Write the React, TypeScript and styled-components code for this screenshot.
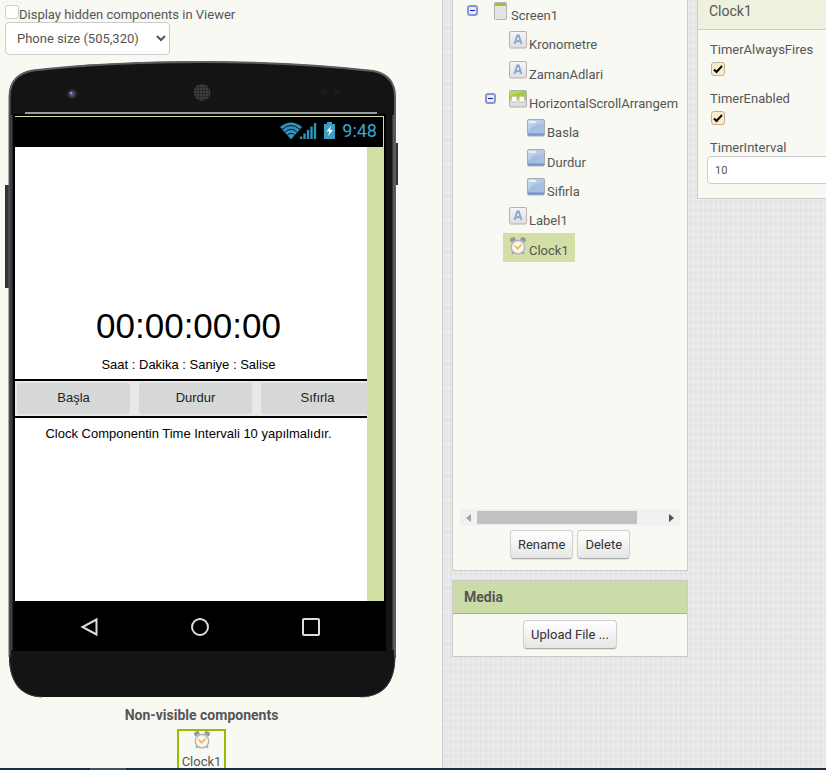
import React from "react";
import styled, { createGlobalStyle, css } from "styled-components";

const GlobalStyle = createGlobalStyle`
  *, *::before, *::after { box-sizing: border-box; }
  html, body, #root { height: 100%; margin: 0; }
  body {
    overflow: hidden;
    font-family: Roboto, "Liberation Sans", sans-serif;
    font-size: 13px;
    line-height: 16px;
    color: #555;
    background-color: #e7e7e7;
    background-image:
      repeating-linear-gradient(0deg, rgba(0,0,0,.015) 0 1px, transparent 1px 3px, rgba(255,255,255,.2) 3px 4px, transparent 4px 7px),
      repeating-linear-gradient(90deg, rgba(0,0,0,.015) 0 1px, transparent 1px 3px, rgba(255,255,255,.2) 3px 4px, transparent 4px 5px);
  }
  button, input, select { font: inherit; color: inherit; margin: 0; }
`;

const Page = styled.div`
  height: 100vh;
  display: grid;
  grid-template-rows: minmax(0, 1fr) 2px;
`;

const Columns = styled.main`
  display: grid;
  grid-template-columns: minmax(0, 1fr) 236px 129px;
  column-gap: 9px;
  overflow: hidden;
`;

const Taskbar = styled.div`
  background: #1b2c3c;
  padding-left: 90px;
`;

const TaskbarItem = styled.div`
  width: 36px;
  height: 2px;
  background: #43525f;
`;

/* ---------- Viewer ---------- */

const Viewer = styled.section`
  background: #f8f9f3;
  border-right: 1px solid #ccc;
  padding: 5px 0 0 5px;
  overflow: hidden;
`;

const ViewerOption = styled.label`
  display: flex;
  align-items: flex-start;
  height: 17px;
  line-height: 19px;
`;

const PlainCheck = styled.input`
  appearance: none;
  width: 14px;
  height: 14px;
  background: #fff;
  border: 1px solid #ccc;
  border-radius: 3px;
`;

const SizeSelect = styled.select`
  display: block;
  width: 165px;
  height: 33px;
  padding: 0 2px 0 7px;
  background: #fff;
  border: 1px solid #ccc;
  border-radius: 4px;
`;

const Device = styled.div`
  position: relative;
  width: 393px;
  height: 643px;
  padding: 59px 12px 0 8px;
`;

const DeviceFrame = styled.svg`
  position: absolute;
  inset: 0;
`;

const Bezel = styled.div`
  position: relative;
  background: #000;
  padding: 2px 2px 0;
`;

const StatusBar = styled.div`
  height: 31px;
  display: flex;
  align-items: center;
  justify-content: flex-end;
  padding: 0 6px 2px 0;
  background: #000;
  border-top: 1px solid #d2e0a6;
  border-right: 1px solid #d2e0a6;
  font-size: 18px;
  line-height: 28px;
  color: #33a9d6;

  svg { margin-right: 6px; }
`;

const Screen = styled.div`
  height: 454px;
  padding-right: 17px;
  background: #d2e0a6;
`;

const AppCanvas = styled.div`
  height: 100%;
  padding-top: 158px;
  background: #fff;
  color: #000;
  text-align: center;
  font-family: "Liberation Sans", Arial, sans-serif;
  padding-right: 5px;
`;

const BigTime = styled.div`
  font-size: 35px;
  line-height: 42px;
`;

const Caption = styled.div`
  line-height: 16px;
  padding: 10px 0 6px;
`;

const Note = styled(Caption)`
  padding: 8px 0;
`;

const ScrollRow = styled.div`
  display: flex;
  gap: 9px;
  margin-right: -5px;
  padding: 2px 0 2px 2px;
  height: 39px;
  overflow: hidden;
  background: #e8e8e8;
  border: solid #000;
  border-width: 2px 0;
`;

const AppButton = styled.button`
  flex: 0 0 113px;
  height: 31px;
  padding: 0 0 2px;
  border: 0;
  border-radius: 2px;
  background: #d6d8d7;
  color: #222;
`;

const NavBar = styled.div`
  display: flex;
  justify-content: space-around;
  align-items: center;
  height: 50px;
  padding: 2px 18px 0;
`;

const NavButton = styled.button`
  display: flex;
  padding: 0;
  border: 0;
  background: none;
`;

const HiddenParts = styled.div`
  display: flex;
  flex-direction: column;
  align-items: center;
  width: 393px;
  padding-top: 9px;
`;

const HiddenTitle = styled.h2`
  margin: 0 0 6px;
  font-size: 14px;
  line-height: 16px;
`;

const HiddenComponent = styled.button`
  display: flex;
  flex-direction: column;
  align-items: center;
  height: 46px;
  padding: 0 3px;
  border: 2px solid #93bf00;
  background: none;

  span { margin-top: 5px; }
`;

/* ---------- Panels ---------- */

const PanelColumn = styled.section`
  display: flex;
  flex-direction: column;
  gap: 9px;
  min-width: 0;
`;

const Panel = styled.div<{ $open?: boolean }>`
  background: #f8f9f3;
  border: 1px solid #ccc;
  ${(p) => p.$open && css`border-top: 0;`}
  overflow: hidden;
`;

const PanelHeader = styled.h2`
  margin: 0;
  padding: 0 11px;
  font-size: 14px;
  line-height: 32px;
  background: #ccdca8;
  border-bottom: 1px solid #aaa;
`;

const TreePanel = styled(Panel)`
  height: 571px;
  padding: 0 7px;
`;

const Tree = styled.ul`
  display: grid;
  grid-auto-rows: 1fr;
  align-content: start;
  height: 264px;
  margin: -2px 0 247px;
  padding: 0;
  list-style: none;
  overflow: hidden;
`;

const TreeRow = styled.li<{ $level: number }>`
  display: flex;
  min-width: 0;
  padding-left: ${(p) => p.$level * 18}px;
`;

const ToggleSlot = styled.div`
  flex: 0 0 25px;
  display: flex;
  justify-content: center;
  align-items: flex-start;
  padding-top: 7px;
`;

const Toggle = styled.button`
  display: flex;
  padding: 0;
  border: 0;
  background: none;
`;

const TreeItem = styled.a<{ $selected?: boolean }>`
  display: flex;
  gap: 2px;
  padding: 4px 6px 0;
  color: #555;
  text-decoration: none;
  white-space: nowrap;
  background: ${(p) => (p.$selected ? "#d2e0a6" : "transparent")};

  svg { flex: none; }
  span { padding-top: 6px; }
`;

const ScrollBar = styled.div`
  display: grid;
  grid-template-columns: 17px 1fr 17px;
  align-items: center;
  height: 17px;
  background: #f1f1f1;
`;

const ScrollArrow = styled.button`
  display: flex;
  justify-content: center;
  padding: 0;
  border: 0;
  background: none;
`;

const ScrollThumb = styled.div`
  width: 86%;
  height: 13px;
  background: #c1c1c1;
`;

const ButtonRow = styled.div`
  display: flex;
  justify-content: center;
  gap: 4px;
  padding: 4px 0;
`;

const MediaBody = styled(ButtonRow)`
  padding: 6px 0 7px;
`;

const PushButton = styled.button`
  height: 29px;
  padding: 1px 7px 0;
  border: 1px solid #d0d0d0;
  border-bottom-color: #aaa;
  border-radius: 4px;
  background: linear-gradient(#fff, #e6e6e6);
  box-shadow: 0 1px 1px rgba(0, 0, 0, .08);
  color: #333;
`;

/* ---------- Properties ---------- */

const PropsPanel = styled(Panel)`
  height: 199px;
  border-right: 0;
`;

const PropsHeader = styled.div`
  height: 30px;
  padding: 3px 11px 0;
  font-size: 14px;
  background: #edf1de;
  border-bottom: 1px solid #ccc;
`;

const Property = styled.div`
  height: 49px;
  padding: 12px 0 0 12px;
  white-space: nowrap;

  label { display: block; }
`;

const CheckBox = styled.span`
  display: grid;
  width: 14px;
  height: 14px;
  margin: 4px 0 0 1px;

  > * { grid-area: 1 / 1; }
  svg { pointer-events: none; }
`;

const TickInput = styled.input`
  appearance: none;
  width: 14px;
  height: 14px;
  background: #fcebcd;
  border: 1px solid #c3b08c;
  border-radius: 3px;

  & + svg { visibility: hidden; }
  &:checked + svg { visibility: visible; }
`;

const TextInput = styled.input`
  width: 160px;
  height: 28px;
  margin-left: -3px;
  padding: 0 7px;
  font-size: 11px;
  background: #fff;
  border: 1px solid #ccc;
  border-radius: 4px;
`;

/* ---------- Icons ---------- */

const ClockIcon = () => (
  <svg width="18" height="18" viewBox="0 0 18 18" aria-hidden="true">
    <path d="M4.500 15l-1.500 2M13.500 15l1.500 2" stroke="#999" strokeWidth="1.500" />
    <path d="M0.500 3L5 .5L7.200 2.500L2.500 5.500z M17.500 3L13 .5L10.800 2.500L15.500 5.500z" fill="#999" />
    <path d="M1.500 1.800l4-1.300M16.500 1.800l-4-1.300" stroke="#888" strokeWidth="1.200" />
    <circle cx="9" cy="10.200" r="6.800" fill="#e6e6e6" stroke="#b0b0b0" strokeWidth="1.200" />
    <circle cx="9" cy="10.200" r="5.300" fill="#f8f8f8" />
    <path d="M5.500 8.500L8.700 11.700L12.500 7.500" fill="none" stroke="#f9b54c" strokeWidth="1.700" />
  </svg>
);

const LabelIcon = () => (
  <svg width="18" height="18" viewBox="0 0 18 18" aria-hidden="true">
    <defs>
      <linearGradient id="labelFill" x1="0" y1="0" x2="0" y2="1">
        <stop offset="0" stopColor="#f6f6f6" /><stop offset="1" stopColor="#dedede" />
      </linearGradient>
    </defs>
    <rect x=".5" y=".5" width="17" height="16.500" rx="1.500" fill="url(#labelFill)" stroke="#b3b3b3" />
    <path d="M5.500 13L8.200 4.500h1.600L12.500 13M6.800 10.200h4.400" fill="none" stroke="#86a7d8" strokeWidth="1.900" />
  </svg>
);

const ButtonIcon = () => (
  <svg width="18" height="18" viewBox="0 0 18 18" aria-hidden="true">
    <defs>
      <linearGradient id="btnFill" x1="0" y1="0" x2="1" y2="1">
        <stop offset="0" stopColor="#c3d5ec" /><stop offset=".45" stopColor="#a4bee0" /><stop offset="1" stopColor="#a9c2e3" />
      </linearGradient>
    </defs>
    <rect x=".5" y=".5" width="17" height="16.500" rx="1.500" fill="url(#btnFill)" stroke="#a9adb3" />
    <path d="M1 1h16v4C10 5 5 7 1 12z" fill="#fff" opacity=".18" />
    <path d="M2 3h7" stroke="#e8f0fa" strokeWidth="2" />
    <path d="M1 15.500h16" stroke="#7092c6" strokeWidth="2" />
  </svg>
);

const ScreenIcon = () => (
  <svg width="18" height="18" viewBox="0 0 18 18" aria-hidden="true">
    <rect x="3.500" y=".5" width="12" height="17" rx="1" fill="#e4e4e4" stroke="#b1b1b1" />
    <path d="M4 1h11v3H4z" fill="#9cc42d" />
  </svg>
);

const ArrangementIcon = () => (
  <svg width="18" height="18" viewBox="0 0 18 18" aria-hidden="true">
    <rect x=".5" y=".5" width="17" height="16.500" rx="1" fill="#dedede" stroke="#b0b0b0" />
    <path d="M1 1h16v9H1z" fill="#a3cb38" />
    <path d="M1 1h14L1 6z" fill="#b8d85e" />
    <rect x="2.500" y="6.500" width="5.500" height="5.500" rx="1.500" fill="#fff" stroke="#c3cab0" />
    <rect x="10" y="6.500" width="5.500" height="5.500" rx="1.500" fill="#fff" stroke="#c3cab0" />
  </svg>
);

const MinusIcon = () => (
  <svg width="11" height="11" viewBox="0 0 11 11" aria-hidden="true">
    <rect x="1" y="1" width="9" height="9" rx="2" fill="#e9ecf8" stroke="#8a97cc" strokeWidth="2" />
    <path d="M3 5.500h5" stroke="#1717c8" />
  </svg>
);

const TickIcon = () => (
  <svg width="14" height="14" viewBox="0 0 14 14" aria-hidden="true">
    <path d="M3 7.500L5.500 10L11 4" fill="none" stroke="#000" strokeWidth="2" />
  </svg>
);

const StatusIcons = () => (
  <svg width="56" height="18" viewBox="0 0 56 18" aria-hidden="true">
    <path d="M0 5Q11 -4 22 5L11 17.500z" fill="#2f93ba" />
    <g fill="none" stroke="#04141b" strokeWidth="1">
      <path d="M2 7.500Q11 -.5 20 7.500" />
      <path d="M4.500 10.500Q11 4 17.500 10.500" />
      <path d="M7 13.500Q11 9 15 13.500" />
    </g>
    <path d="M21 14.500v2.500M24.500 11.500v5.500M28 8v9M31.500 4.500v12.500M35 1v16" stroke="#2f93ba" strokeWidth="2.400" />
    <path d="M47 0h5v2h3v15H44V2h3z" fill="#3a9fc6" />
    <path d="M51 4l-4.500 5.500h3L48 14l5-6h-3z" fill="#fff" />
  </svg>
);

const PhoneFrame = () => (
  <DeviceFrame width="393" height="643" viewBox="0 0 393 643" aria-hidden="true">
    <defs>
      <pattern id="grille" width="3" height="3" patternUnits="userSpaceOnUse">
        <rect width="3" height="3" fill="#2b2928" />
        <circle cx="1" cy="1" r=".8" fill="#5a5552" />
      </pattern>
    </defs>
    <rect x="0" y="130" width="6" height="103" fill="#333436" />
    <rect x="388" y="88" width="5" height="42" fill="#333436" />
    <path
      d="M4 42C4 26 13 18 28 15C90 8 145 6.500 197 6.500C250 6.500 310 9 368 15.500C382 18 390 27 390 42V603C390 627 379 642 356 642H37C14 642 4 625 4 602Z"
      fill="#141414"
    />
    <path
      d="M4.500 602V42C4.500 26 13 18 28 15.500C90 8.500 145 7 197 7C250 7 310 9.500 368 16C382 18.500 390 27 390 42V603"
      fill="none" stroke="#5c5d60" strokeWidth="2"
    />
    <path d="M4.500 600C4.500 625 14 641 37 642M390 600C390 627 379 641 356 642" fill="none" stroke="#3a3a3c" />
    <path d="M6 60V595" stroke="#3b3c3f" strokeWidth="3" />
    <path d="M388.500 60V595" stroke="#57565a" strokeWidth="2" />
    <path d="M20 58h352" stroke="#c8c8c8" strokeWidth="1.500" />
    <circle cx="67" cy="39" r="5" fill="#2b2c33" />
    <circle cx="67" cy="39" r="2.800" fill="#4b507a" />
    <circle cx="66" cy="38" r="1.200" fill="#9298b8" />
    <circle cx="197" cy="37.500" r="8.500" fill="url(#grille)" />
    <circle cx="319" cy="37" r="3" fill="#1e1a19" />
    <circle cx="332" cy="37" r="3" fill="#1e1a19" />
  </DeviceFrame>
);

const navIcons: [string, React.ReactNode][] = [
  ["Back", <path key="b" d="M17.500 2.500V17.500L3.500 10z" />],
  ["Home", <circle key="h" cx="10" cy="10" r="8" />],
  ["Recent", <rect key="r" x="2" y="2" width="16" height="16" rx="1" />],
];

const tree = [
  { name: "Screen1", level: 0, Icon: ScreenIcon, open: true },
  { name: "Kronometre", level: 1, Icon: LabelIcon },
  { name: "ZamanAdlari", level: 1, Icon: LabelIcon },
  { name: "HorizontalScrollArrangem", level: 1, Icon: ArrangementIcon, open: true },
  { name: "Basla", level: 2, Icon: ButtonIcon },
  { name: "Durdur", level: 2, Icon: ButtonIcon },
  { name: "Sifirla", level: 2, Icon: ButtonIcon },
  { name: "Label1", level: 1, Icon: LabelIcon },
  { name: "Clock1", level: 1, Icon: ClockIcon, selected: true },
];

const CheckProperty = ({ name }: { name: string }) => (
  <Property>
    <label htmlFor={name}>{name}</label>
    <CheckBox>
      <TickInput id={name} type="checkbox" defaultChecked />
      <TickIcon />
    </CheckBox>
  </Property>
);

export default function App() {
  return (
    <Page>
      <GlobalStyle />
      <Columns>
        <Viewer>
          <ViewerOption>
            <PlainCheck type="checkbox" />
            Display hidden components in Viewer
          </ViewerOption>
          <SizeSelect aria-label="Screen size">
            <option>Phone size (505,320)</option>
          </SizeSelect>
          <Device>
            <PhoneFrame />
            <Bezel>
              <StatusBar>
                <StatusIcons />
                9:48
              </StatusBar>
              <Screen>
                <AppCanvas>
                  <BigTime>00:00:00:00</BigTime>
                  <Caption>Saat : Dakika : Saniye : Salise</Caption>
                  <ScrollRow>
                    <AppButton>Başla</AppButton>
                    <AppButton>Durdur</AppButton>
                    <AppButton>Sıfırla</AppButton>
                  </ScrollRow>
                  <Note>Clock Componentin Time Intervali 10 yapılmalıdır.</Note>
                </AppCanvas>
              </Screen>
              <NavBar>
                {navIcons.map(([label, shape]) => (
                  <NavButton key={label} aria-label={label}>
                    <svg width="20" height="20" viewBox="0 0 20 20" fill="none" stroke="#ddd" strokeWidth="2">
                      {shape}
                    </svg>
                  </NavButton>
                ))}
              </NavBar>
            </Bezel>
          </Device>
          <HiddenParts>
            <HiddenTitle>Non-visible components</HiddenTitle>
            <HiddenComponent>
              <ClockIcon />
              <span>Clock1</span>
            </HiddenComponent>
          </HiddenParts>
        </Viewer>

        <PanelColumn>
          <TreePanel $open>
            <Tree>
              {tree.map(({ name, level, Icon, open, selected }) => (
                <TreeRow key={name} $level={level}>
                  <ToggleSlot>
                    {open && <Toggle aria-label={`Collapse ${name}`}><MinusIcon /></Toggle>}
                  </ToggleSlot>
                  <TreeItem href="#" $selected={selected}>
                    <Icon />
                    <span>{name}</span>
                  </TreeItem>
                </TreeRow>
              ))}
            </Tree>
            <ScrollBar>
              <ScrollArrow aria-label="Scroll left">
                <svg width="5" height="8" viewBox="0 0 5 8"><path d="M5 0v8L0 4z" fill="#a3a3a3" /></svg>
              </ScrollArrow>
              <ScrollThumb />
              <ScrollArrow aria-label="Scroll right">
                <svg width="5" height="8" viewBox="0 0 5 8"><path d="M0 0v8L5 4z" fill="#505050" /></svg>
              </ScrollArrow>
            </ScrollBar>
            <ButtonRow>
              <PushButton>Rename</PushButton>
              <PushButton>Delete</PushButton>
            </ButtonRow>
          </TreePanel>
          <Panel>
            <PanelHeader>Media</PanelHeader>
            <MediaBody>
              <PushButton>Upload File ...</PushButton>
            </MediaBody>
          </Panel>
        </PanelColumn>

        <PanelColumn>
          <PropsPanel $open>
            <PropsHeader>Clock1</PropsHeader>
            <CheckProperty name="TimerAlwaysFires" />
            <CheckProperty name="TimerEnabled" />
            <Property>
              <label htmlFor="TimerInterval">TimerInterval</label>
              <TextInput id="TimerInterval" type="text" defaultValue="10" />
            </Property>
          </PropsPanel>
        </PanelColumn>
      </Columns>
      <Taskbar><TaskbarItem /></Taskbar>
    </Page>
  );
}
